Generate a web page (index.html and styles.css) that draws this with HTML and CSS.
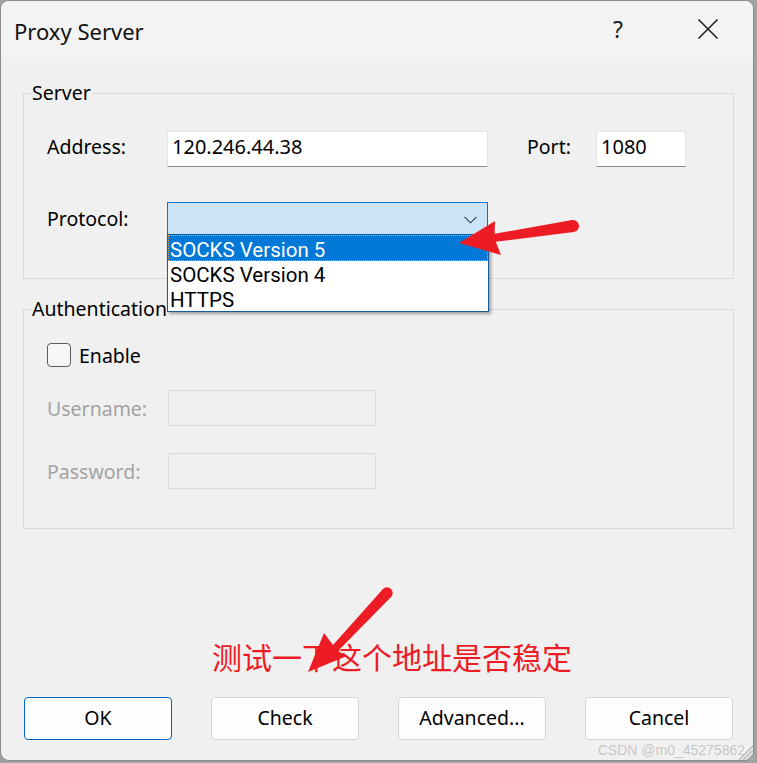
FILE: index.html
```html
<!DOCTYPE html>
<html lang="en">
<head>
<meta charset="utf-8">
<title>Proxy Server</title>
<link rel="stylesheet" href="styles.css">
</head>
<body>
<div class="window">
  <div class="titlebar">
    <div class="title">Proxy Server</div>
    <div class="tb-btn help">?</div>
    <div class="tb-btn close">
      <svg width="22" height="22" viewBox="0 0 22 22"><path d="M1.5 1.5 L20.5 20.5 M20.5 1.5 L1.5 20.5" stroke="#1b1b1b" stroke-width="1.5" fill="none"/></svg>
    </div>
  </div>

  <div class="content">
    <fieldset class="group">
      <legend>Server</legend>
      <div class="group-body server-body">
        <div class="row address-row">
          <span class="lbl lbl-main">Address:</span>
          <div class="textbox addr">120.246.44.38</div>
          <span class="lbl lbl-port">Port:</span>
          <div class="textbox port">1080</div>
        </div>
        <div class="row row-protocol">
          <span class="lbl lbl-main">Protocol:</span>
          <div class="combo">
            <svg class="chev" width="13" height="8" viewBox="0 0 13 8"><path d="M0.5 0.8 L6.5 6.8 L12.5 0.8" stroke="#3c3c3c" stroke-width="1.1" fill="none"/></svg>
            <ul class="dropdown">
              <li class="item selected">SOCKS Version 5</li>
              <li class="item">SOCKS Version 4</li>
              <li class="item">HTTPS</li>
            </ul>
          </div>
        </div>
      </div>
    </fieldset>

    <fieldset class="group auth">
      <legend>Authentication</legend>
      <div class="group-body auth-body">
        <div class="row check-row">
          <span class="checkbox"></span>
          <span class="check-lbl">Enable</span>
        </div>
        <div class="row field-row user-row">
          <span class="lbl lbl-disabled">Username:</span>
          <div class="textbox disabled"></div>
        </div>
        <div class="row field-row pass-row">
          <span class="lbl lbl-disabled">Password:</span>
          <div class="textbox disabled"></div>
        </div>
      </div>
    </fieldset>

    <div class="note">测试一下这个地址是否稳定</div>

    <div class="buttons">
      <button class="btn default">OK</button>
      <button class="btn">Check</button>
      <button class="btn">Advanced...</button>
      <button class="btn">Cancel</button>
    </div>
  </div>

  <svg class="annot" width="757" height="763" viewBox="0 0 757 763">
    <g fill="#ed1c24">
      <path d="M572.1 220.1 L494.6 233.8 L495 221 L459 243 L501 255 L495.8 241.8 L573.9 231.9 Z"/>
      <circle cx="573" cy="226" r="6"/>
      <path d="M383 589 L333 645 L324 633 L308 672 L347 656 L338 651 L391 597 Z"/>
      <circle cx="387" cy="593" r="5.7"/>
    </g>
  </svg>

  <div class="watermark">CSDN @m0_45275862</div>
  <svg class="grip" width="16" height="16" viewBox="0 0 16 16">
    <path d="M16 2 L2 16 M16 6 L6 16 M16 10 L10 16 M16 14 L14 16" stroke="#b8b8b8" stroke-width="1.4"/>
  </svg>
</div>
</body>
</html>
```

FILE: styles.css
```css
* { box-sizing: border-box; }

html, body {
  margin: 0;
  padding: 0;
}

body {
  background: #a2a2a2;
  padding: 1px 0 0 1px;
  font-family: "Noto Sans", "Open Sans", sans-serif;
  font-size: 19.5px;
  color: #000;
  width: 757px;
  height: 763px;
  overflow: hidden;
}

.window {
  position: relative;
  width: 752px;
  height: 759px;
  background: #f0f0f0;
  border-radius: 8px;
  box-shadow: 0 0 0 1px #8c8c8c;
}

.titlebar {
  height: 57px;
  display: flex;
  align-items: center;
  background: #f3f3f3;
  border-radius: 8px 8px 0 0;
}

.title {
  flex: 1;
  padding-left: 13px;
  padding-top: 3px;
  font-size: 22px;
  color: #111;
}

.tb-btn {
  width: 90px;
  height: 57px;
  display: flex;
  align-items: center;
  justify-content: center;
}

.help {
  font-size: 23px;
  color: #1b1b1b;
  padding-bottom: 1px;
}

.close svg { display: block; margin-top: -2px; }

.content {
  padding-left: 22px;
}

.group {
  width: 711px;
  margin: 0;
  padding: 0;
  border: 1px solid #dadada;
  min-inline-size: 0;
}

.group legend {
  margin-left: 7px;
  padding: 0 1px;
  line-height: 20px;
  height: 20px;
}

.group:first-child { margin-top: 25px; }
.auth { margin-top: 20px; }

.group-body {
  padding-left: 23px;
}

.server-body {
  padding-top: 28px;
  padding-bottom: 43px;
}

.row {
  display: flex;
  align-items: center;
  height: 36px;
}

.lbl-main { width: 120px; }

.textbox {
  height: 36px;
  background: #fff;
  border: 1px solid #e4e4e4;
  border-bottom-color: #8a8a8a;
  display: flex;
  align-items: center;
  padding-left: 4px;
  font-size: 20px;
}

.address-row .lbl,
.address-row .textbox {
  padding-bottom: 5px;
}

.addr { width: 321px; }

.lbl-port {
  margin-left: 39px;
  width: 69px;
}

.port { width: 90px; }

.row-protocol {
  margin-top: 35px;
  height: 33px;
}

.combo {
  position: relative;
  width: 321px;
  height: 33px;
  background: #cce4f7;
  border: 1px solid #0078d7;
}

.chev {
  position: absolute;
  right: 10px;
  top: 13px;
}

.dropdown {
  position: absolute;
  z-index: 10;
  left: -1px;
  top: 31px;
  width: 322px;
  margin: 0;
  padding: 0;
  list-style: none;
  background: #fff;
  border: 1px solid #1a5a9a;
  box-shadow: 2px 2px 3px rgba(0, 0, 0, 0.35);
  font-family: Roboto, "Noto Sans", sans-serif;
  font-size: 20.5px;
}

.item {
  height: 25px;
  padding-top: 2px;
  line-height: 25px;
  padding-left: 2px;
}

.item.selected {
  background: #0078d7;
  color: #fff;
  outline: 1px dotted #f2a548;
  outline-offset: -1px;
  height: 26px;
  line-height: 27px;
}

.auth-body {
  padding-top: 24px;
  padding-bottom: 39px;
}

.check-row { height: 24px; }

.checkbox {
  width: 24px;
  height: 24px;
  border: 1px solid #5c5c5c;
  border-radius: 4px;
  background: #f6f6f6;
}

.check-lbl { margin-left: 8px; }

.user-row { margin-top: 23px; }
.pass-row { margin-top: 27px; }

.lbl-disabled {
  width: 121px;
  color: #a3a3a3;
}

.textbox.disabled {
  width: 208px;
  background: #f0f0f0;
  border: 1px solid #dcdcdc;
}

.note {
  margin-top: 107px;
  margin-left: 189px;
  height: 40px;
  line-height: 40px;
  font-family: "Noto Sans CJK SC", sans-serif;
  font-size: 30px;
  color: #ed1c24;
}

.buttons {
  margin-top: 21px;
  margin-left: 1px;
  width: 709px;
  display: flex;
  justify-content: space-between;
}

.btn {
  width: 148px;
  height: 43px;
  background: #fdfdfd;
  border: 1px solid #d4d4d4;
  border-radius: 4px;
  font-family: "Noto Sans", sans-serif;
  font-size: 19.5px;
  color: #000;
  padding: 0 0 2px;
}

.btn.default {
  border-color: #0067c0;
}

.annot {
  position: absolute;
  left: -1px;
  top: -1px;
  z-index: 20;
  pointer-events: none;
}

.watermark {
  position: absolute;
  right: 8px;
  bottom: 2px;
  font-family: "Liberation Sans", sans-serif;
  font-size: 14px;
  color: #c4c4c4;
  text-shadow: 0 0 1px #fff;
  z-index: 5;
}

.grip {
  position: absolute;
  right: 0;
  bottom: 0;
  z-index: 6;
}
```
